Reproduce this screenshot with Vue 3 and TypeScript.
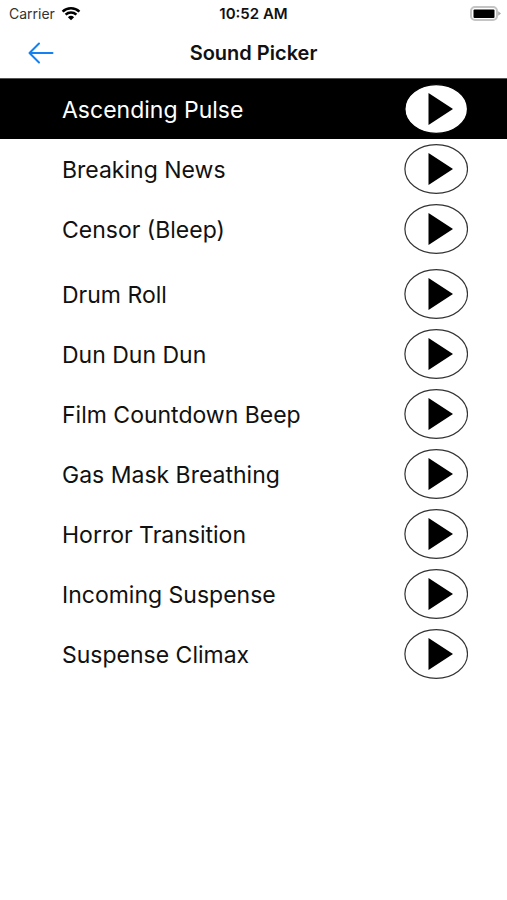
<script setup lang="ts">
import { ref } from 'vue'

interface Sound {
  id: number
  name: string
}

const groups: Sound[][] = [
  [
    { id: 1, name: 'Ascending Pulse' },
    { id: 2, name: 'Breaking News' },
    { id: 3, name: 'Censor (Bleep)' },
  ],
  [
    { id: 4, name: 'Drum Roll' },
    { id: 5, name: 'Dun Dun Dun' },
    { id: 6, name: 'Film Countdown Beep' },
    { id: 7, name: 'Gas Mask Breathing' },
    { id: 8, name: 'Horror Transition' },
    { id: 9, name: 'Incoming Suspense' },
    { id: 10, name: 'Suspense Climax' },
  ],
]

const selected = ref<number>(1)
</script>

<template>
  <div class="screen">
    <div class="status">
      <div class="carrier">
        <span>Carrier</span>
        <svg class="wifi" viewBox="0 0 20 15" aria-hidden="true">
          <path d="M1.6 5.6A12.2 12.2 0 0 1 18.4 5.6" />
          <path d="M4.6 8.6A8 8 0 0 1 15.4 8.6" />
          <path class="dot" d="M10 14.2L6.9 11.2A4.5 4.5 0 0 1 13.1 11.2Z" />
        </svg>
      </div>
      <span class="time">10:52 AM</span>
      <svg class="battery" viewBox="0 0 31 16" aria-hidden="true">
        <rect class="shell" x="1" y="1" width="26" height="13" rx="4" />
        <rect x="3.5" y="3.5" width="21" height="8.5" rx="1" />
        <path class="tip" d="M28.2 5.2L31 7.5L28.2 9.8Z" />
      </svg>
    </div>

    <header class="nav">
      <button class="back" type="button" aria-label="Back">
        <svg viewBox="0 0 26 22" aria-hidden="true">
          <path d="M24.5 11H2M11 1.5L1.5 11L11 20.5" />
        </svg>
      </button>
      <h1>Sound Picker</h1>
    </header>

    <main class="groups">
      <ul v-for="(group, index) in groups" :key="index" class="list">
        <li
          v-for="sound in group"
          :key="sound.id"
          class="row"
          :class="{ active: sound.id === selected }"
        >
          <button class="name" type="button" @click="selected = sound.id">{{ sound.name }}</button>
          <button class="play" type="button" :aria-label="`Play ${sound.name}`">
            <svg viewBox="0 0 64 50" aria-hidden="true">
              <ellipse cx="32.2" cy="25" rx="31.3" ry="24.4" />
              <path d="M24.5 9L49 25L24.5 41Z" />
            </svg>
          </button>
        </li>
      </ul>
    </main>
  </div>
</template>

<style>
body {
  background: #fff;
}
</style>

<style scoped>
.screen {
  font-family: Inter, 'Liberation Sans', sans-serif;
  color: #111;
}

button {
  padding: 0;
  border: 0;
  background: none;
  color: inherit;
  font: inherit;
  cursor: pointer;
}

svg {
  display: block;
}

.status {
  display: grid;
  grid-template-columns: 1fr auto 1fr;
  align-items: center;
  height: 27px;
  padding: 0 6px;
  font-size: 14px;
}

.carrier {
  display: flex;
  align-items: center;
  gap: 6px;
  padding-left: 3px;
  color: #333;
}

.wifi {
  width: 20px;
  height: 15px;
  fill: none;
  stroke: #000;
  stroke-width: 2.6;
}

.wifi .dot {
  fill: #000;
  stroke: none;
}

.time {
  font-size: 15px;
  font-weight: 600;
}

.battery {
  justify-self: end;
  width: 31px;
  height: 16px;
}

.battery .shell {
  fill: #fff;
  stroke: #c4c4c4;
  stroke-width: 2;
}

.battery .tip {
  fill: #aaa;
}

.nav {
  display: grid;
  grid-template-columns: 1fr auto 1fr;
  align-items: center;
  height: 51px;
  padding: 0 28px;
  border-bottom: 1px solid #555;
}

.back {
  justify-self: start;
}

.back svg {
  width: 26px;
  height: 22px;
  fill: none;
  stroke: #1580f0;
  stroke-width: 2;
  stroke-linecap: round;
  stroke-linejoin: round;
}

h1 {
  margin: 0;
  font-size: 20px;
  font-weight: 600;
  line-height: 24px;
}

.groups {
  display: flex;
  flex-direction: column;
  gap: 5px;
}

.list {
  margin: 0;
  padding: 0;
  list-style: none;
}

.row {
  display: flex;
  align-items: center;
  height: 60px;
  padding: 0 39px 0 62px;
}

.active {
  background: #000;
  color: #fff;
}

.name {
  flex: 1;
  align-self: stretch;
  padding-top: 2px;
  font-size: 23px;
  text-align: left;
}

.play svg {
  width: 64px;
  height: 50px;
}

.play ellipse {
  fill: #fff;
  stroke: #333;
  stroke-width: 1.2;
}

.active .play ellipse {
  stroke: #000;
}

.play path {
  fill: #000;
}
</style>
